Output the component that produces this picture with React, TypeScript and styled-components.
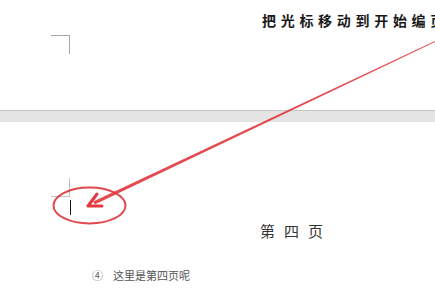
import React from "react";
import styled, { createGlobalStyle } from "styled-components";

const GlobalStyle = createGlobalStyle`
    html, body {
        margin: 0;
        padding: 0;
        background: #ffffff;
    }
    body {
        width: 435px;
        height: 290px;
        overflow: hidden;
        font-family: "Noto Sans CJK SC", "Noto Sans", sans-serif;
    }
`;

const Screen = styled.div`
    position: relative;
    width: 435px;
    height: 290px;
    overflow: hidden;
    background: #ffffff;
`;

const TopPage = styled.div`
    height: 110px;
    background: #ffffff;
    padding-top: 10px;
    box-sizing: border-box;
`;

const Instruction = styled.div`
    padding-left: 262px;
    height: 20px;
    line-height: 20px;
    font-size: 14px;
    font-weight: 700;
    letter-spacing: 4.7px;
    color: #1a1a1a;
    white-space: nowrap;
    font-family: "Noto Sans CJK SC", "Noto Sans CJK TC", sans-serif;
`;

const CornerMark = styled.div<{ $corner: "topRight" | "bottomRight"; $top: number }>`
    width: 19px;
    height: 19px;
    margin-left: 51px;
    margin-top: ${(p) => p.$top}px;
    box-sizing: border-box;
    border-right: 1px solid #a8a8a8;
    border-top: ${(p) => (p.$corner === "topRight" ? "1px solid #a8a8a8" : "none")};
    border-bottom: ${(p) => (p.$corner === "bottomRight" ? "1px solid #c4c4c4" : "none")};
    border-right-color: ${(p) => (p.$corner === "bottomRight" ? "#c4c4c4" : "#a8a8a8")};
`;

const PageGap = styled.div`
    height: 12px;
    box-sizing: border-box;
    background: #e4e4e4;
    border-top: 1px solid #c6c6c6;
`;

const BottomPage = styled.div`
    background: #ffffff;
`;

const Cursor = styled.div`
    width: 1px;
    height: 15px;
    margin-left: 70px;
    margin-top: 3px;
    background: #111111;
`;

const PageTitle = styled.div`
    margin-top: 7px;
    padding-left: 260px;
    font-size: 15px;
    line-height: 18px;
    letter-spacing: 9px;
    color: #333333;
`;

const Footnote = styled.div`
    margin-top: 28px;
    padding-left: 92px;
    display: flex;
    align-items: center;
    gap: 10px;
    font-size: 11px;
    line-height: 14px;
    color: #555555;
`;

const NoteNumber = styled.span`
    font-size: 11px;
    color: #666666;
`;

const Annotation = styled.svg`
    position: absolute;
    left: 0;
    top: 0;
    pointer-events: none;
`;

const ArrowOverlay: React.FC = () => {
    // tapered red line from the instruction down to the cursor
    const tip = { x: 88, y: 206 };
    return (
        <Annotation width={435} height={290} viewBox="0 0 435 290">
            <ellipse
                cx={89.5}
                cy={205.5}
                rx={36}
                ry={18}
                fill="none"
                stroke="#e0343c"
                strokeWidth={2}
                opacity={0.9}
            />
            <polygon
                points="436,40.5 436,41.5 94.7,204.4 93.3,201.6"
                fill="#e23a40"
                opacity={0.92}
            />
            <polyline
                points={`102,206 ${tip.x},${tip.y} 97,194`}
                fill="none"
                stroke="#e23a40"
                strokeWidth={3}
                strokeLinecap="round"
                strokeLinejoin="round"
            />
        </Annotation>
    );
};

const App: React.FC = () => {
    return (
        <>
            <GlobalStyle />
            <Screen>
                <TopPage>
                    <Instruction>把光标移动到开始编页</Instruction>
                    <CornerMark $corner="topRight" $top={5} />
                </TopPage>
                <PageGap />
                <BottomPage>
                    <CornerMark $corner="bottomRight" $top={56} />
                    <Cursor />
                    <PageTitle>第四页</PageTitle>
                    <Footnote>
                        <NoteNumber>④</NoteNumber>
                        <span>这里是第四页呢</span>
                    </Footnote>
                </BottomPage>
                <ArrowOverlay />
            </Screen>
        </>
    );
};

export default App;
